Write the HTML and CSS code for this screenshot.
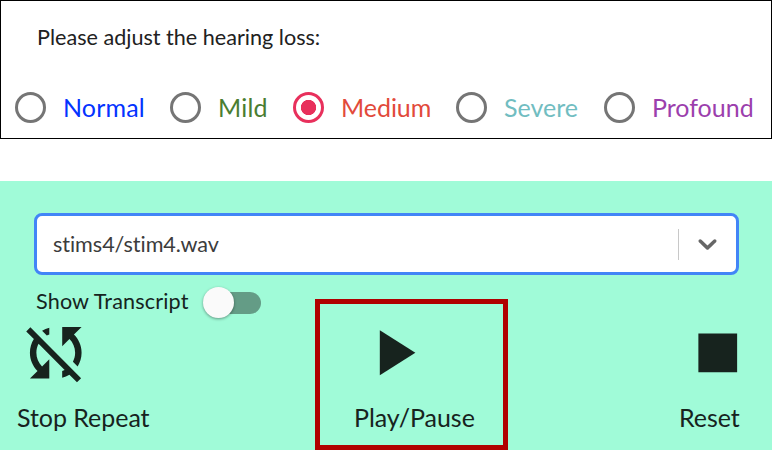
FILE: index.html
```html
<!DOCTYPE html>
<html lang="en">
<head>
<meta charset="utf-8">
<title>Hearing loss simulator</title>
<link rel="stylesheet" href="styles.css">
</head>
<body>
<section class="loss">
  <h1 class="loss-title">Please adjust the hearing loss:</h1>
  <div class="options">
    <label class="option normal"><span class="radio"></span><span class="option-text">Normal</span></label>
    <label class="option mild"><span class="radio"></span><span class="option-text">Mild</span></label>
    <label class="option medium"><span class="radio checked"></span><span class="option-text">Medium</span></label>
    <label class="option severe"><span class="radio"></span><span class="option-text">Severe</span></label>
    <label class="option profound"><span class="radio"></span><span class="option-text">Profound</span></label>
  </div>
</section>
<section class="player">
  <div class="select">
    <span class="select-value">stims4/stim4.wav</span>
    <span class="select-divider"></span>
    <svg class="chevron" viewBox="0 0 20 20"><path d="M4.516 7.548c0.436-0.446 1.043-0.481 1.576 0l3.908 3.747 3.908-3.747c0.533-0.481 1.141-0.446 1.574 0 0.436 0.445 0.408 1.197 0 1.615-0.406 0.418-4.695 4.502-4.695 4.502-0.217 0.223-0.502 0.335-0.787 0.335s-0.57-0.112-0.789-0.335c0 0-4.287-4.084-4.695-4.502s-0.436-1.17 0-1.615z"/></svg>
  </div>
  <div class="transcript">
    <span class="transcript-label">Show Transcript</span>
    <span class="switch"><span class="thumb"></span></span>
  </div>
  <div class="controls">
    <div class="control repeat">
      <svg class="icon" viewBox="0 0 24 24"><path d="M10 6.35V4.26c-.8.21-1.55.54-2.23.96l1.46 1.46c.25-.12.5-.24.77-.33zm-7.14-.94l2.36 2.36C4.45 8.99 4 10.44 4 12c0 2.21.91 4.2 2.36 5.64L4 20h6v-6l-2.24 2.24C6.68 15.15 6 13.66 6 12c0-1 .25-1.94.68-2.77l8.08 8.08c-.25.13-.5.25-.77.34v2.09c.8-.21 1.55-.54 2.23-.96l2.36 2.36 1.27-1.27L4.14 4.14 2.86 5.41zM20 4h-6v6l2.24-2.24C17.32 8.85 18 10.34 18 12c0 1-.25 1.94-.68 2.77l1.46 1.46C19.55 15.01 20 13.56 20 12c0-2.21-.91-4.2-2.36-5.64L20 4z"/></svg>
      <span class="caption">Stop Repeat</span>
    </div>
    <div class="control play">
      <svg class="icon" viewBox="0 0 24 24"><path d="M8 5v14l11-7z"/></svg>
      <span class="caption">Play/Pause</span>
    </div>
    <div class="control reset">
      <svg class="icon" viewBox="0 0 24 24"><path d="M6 6h12v12H6z"/></svg>
      <span class="caption">Reset</span>
    </div>
  </div>
</section>
</body>
</html>
```
FILE: styles.css
```css
* { box-sizing: border-box; }
body {
  margin: 0;
  width: 772px;
  height: 450px;
  overflow: hidden;
  background: #fff;
  font-family: Lato, sans-serif;
  font-variant-ligatures: none;
  color: #212121;
}
.loss {
  height: 139px;
  border: 1px solid #000;
  padding: 21px 0 0 14px;
}
.loss-title {
  margin: 0 0 0 22px;
  font-size: 21.6px;
  font-weight: 400;
  line-height: 30px;
}
.options {
  display: grid;
  grid-template-columns: 155px 123px 163px 148px auto;
  margin-top: 39px;
  font-size: 25px;
  line-height: 32px;
}
.option {
  display: flex;
  align-items: center;
  gap: 17px;
  height: 32px;
  white-space: nowrap;
}
.option-text { padding-bottom: 1px; }
.radio {
  flex: none;
  width: 31px;
  height: 31px;
  border: 3px solid #757575;
  border-radius: 50%;
}
.radio.checked {
  border-color: #e8305c;
  background: radial-gradient(circle, #e8305c 7.3px, transparent 8px);
}
.normal { color: #0433ff; letter-spacing: .15px; }
.mild { color: #4a7d31; letter-spacing: .2px; }
.medium { color: #e24a3b; letter-spacing: -.05px; }
.severe { color: #71bdc1; }
.profound { color: #9c3fad; }
.player {
  height: 269px;
  margin-top: 42px;
  padding-top: 32px;
  background: #a0fbd8;
}
.select {
  display: flex;
  align-items: center;
  width: 705.4px;
  height: 62px;
  margin-left: 34px;
  padding-left: 16px;
  border: 3px solid #4285f7;
  border-radius: 8px;
  background: #fff;
  color: #3c3c3c;
  font-size: 21.6px;
  letter-spacing: -.05px;
}
.select-value {
  flex: 1;
  margin-top: -1px;
}
.select-divider {
  width: 1px;
  height: 31px;
  background: #c8c8c8;
}
.chevron {
  width: 31px;
  height: 31px;
  margin: -1px 13px 0;
  fill: #666;
}
.transcript {
  display: flex;
  align-items: center;
  height: 45px;
  margin: 5px 0 0 36px;
}
.transcript-label {
  width: 174px;
  font-size: 21.6px;
  letter-spacing: .15px;
  line-height: 30px;
  color: #15241e;
  margin-top: -3px;
}
.switch {
  display: flex;
  align-items: center;
  width: 51px;
  height: 22px;
  border-radius: 11px;
  background: #649c86;
}
.thumb {
  flex: none;
  width: 31px;
  height: 31px;
  margin-left: -7px;
  border-radius: 50%;
  background: #fafafa;
  box-shadow: 0 1px 3px rgba(0, 0, 0, .4);
}
.controls {
  display: grid;
  grid-template-columns: 315px 193px 1fr;
  height: 151px;
  margin-top: -26px;
  color: #17231e;
}
.control {
  display: flex;
  flex-direction: column;
  padding-top: 15px;
}
.repeat { padding-left: 17px; }
.play {
  border: 5px solid #b00000;
  padding: 10px 0 0 34px;
}
.reset { padding-left: 171px; }
.icon {
  flex: none;
  width: 77.5px;
  height: 77.5px;
  fill: #17231e;
}
.caption {
  margin-top: 9.5px;
  font-size: 25px;
  letter-spacing: -.04px;
  line-height: 32px;
  white-space: nowrap;
}
```
